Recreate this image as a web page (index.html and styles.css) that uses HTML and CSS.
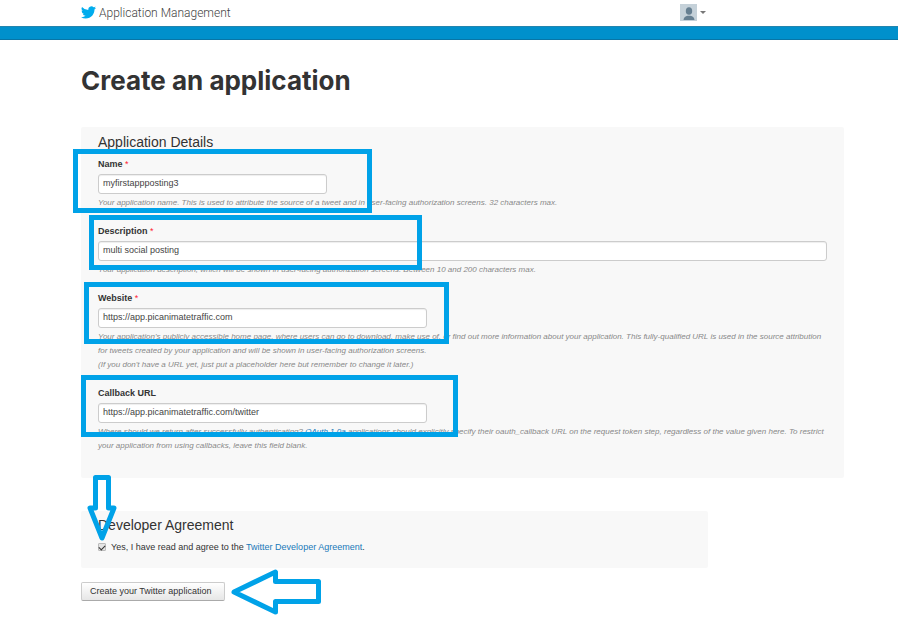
FILE: index.html
```html
<!DOCTYPE html>
<html lang="en">
<head>
<meta charset="utf-8">
<title>Create an application | Application Management</title>
<link rel="stylesheet" href="styles.css">
</head>
<body>
<header class="topbar">
  <a class="brand" href="#">
    <svg class="bird" viewBox="0 0 24 20" aria-hidden="true"><path d="M24 2.4a9.800 9.800 0 0 1-2.830.780A4.940 4.940 0 0 0 23.340.450a9.860 9.860 0 0 1-3.130 1.200 4.920 4.920 0 0 0-8.390 4.490A13.980 13.980 0 0 1 1.670 1a4.920 4.920 0 0 0 1.520 6.570 4.900 4.900 0 0 1-2.230-.620v.060a4.930 4.930 0 0 0 3.950 4.830 4.900 4.900 0 0 1-2.220.080 4.930 4.930 0 0 0 4.600 3.420A9.870 9.870 0 0 1 0 17.540a13.950 13.950 0 0 0 7.550 2.210c9.050 0 14-7.500 14-14l-.020-.640A10 10 0 0 0 24 2.400z"/></svg>
    <span>Application Management</span>
  </a>
  <button class="account" type="button" aria-label="Account menu">
    <svg class="avatar" viewBox="0 0 17 17" aria-hidden="true"><rect width="17" height="17" fill="#c5d1d9"/><ellipse cx="9" cy="7" rx="3.200" ry="3.800" fill="#667f91"/><path d="M3.500 16c.2-3 2-4 4-4.300h3c2 .3 3.800 1.300 4 4.300z" fill="#667f91"/></svg>
    <span class="caret"></span>
  </button>
</header>
<div class="band"></div>
<main class="page">
  <h1>Create an application</h1>
  <form>
    <section class="panel">
      <h2>Application Details</h2>
      <div class="fields">
        <div class="field">
          <label for="name">Name <span class="required">*</span></label>
          <input class="short" id="name" type="text" value="myfirstappposting3">
          <p>Your application name. This is used to attribute the source of a tweet and in user-facing authorization screens. 32 characters max.</p>
          <span class="mark mark-name"></span>
        </div>
        <div class="field">
          <label for="description">Description <span class="required">*</span></label>
          <input id="description" type="text" value="multi social posting">
          <p>Your application description, which will be shown in user-facing authorization screens. Between 10 and 200 characters max.</p>
          <span class="mark mark-description"></span>
        </div>
        <div class="field">
          <label for="website">Website <span class="required">*</span></label>
          <input class="medium" id="website" type="text" value="https://app.picanimatetraffic.com">
          <p>Your application's publicly accessible home page, where users can go to download, make use of, or find out more information about your application. This fully-qualified URL is used in the source attribution for tweets created by your application and will be shown in user-facing authorization screens.<br>(If you don't have a URL yet, just put a placeholder here but remember to change it later.)</p>
          <span class="mark mark-website"></span>
        </div>
        <div class="field">
          <label for="callback">Callback URL</label>
          <input class="medium" id="callback" type="text" value="https://app.picanimatetraffic.com/twitter">
          <p>Where should we return after successfully authenticating? <a href="#">OAuth 1.0a</a> applications should explicitly specify their oauth_callback URL on the request token step, regardless of the value given here. To restrict your application from using callbacks, leave this field blank.</p>
          <span class="mark mark-callback"></span>
        </div>
      </div>
    </section>
    <section class="panel agreement">
      <h2>Developer Agreement</h2>
      <div class="agree">
        <input id="agree" type="checkbox" checked>
        <label for="agree">Yes, I have read and agree to the <a href="#">Twitter Developer Agreement</a>.</label>
      </div>
      <svg class="arrow-down" viewBox="0 0 30 66" aria-hidden="true"><path d="M8.500 2.500h13V33H27L15 63 3 33h5.500z"/></svg>
    </section>
    <div class="actions">
      <button class="submit" type="submit">Create your Twitter application</button>
      <svg class="arrow-left" viewBox="0 0 90 48" aria-hidden="true"><path d="M3 24 44.500 4v9.500h43v20h-43V44z"/></svg>
    </div>
  </form>
</main>
</body>
</html>
```
FILE: styles.css
```css
* { box-sizing: border-box; }
body {
  margin: 0;
  background: #fff;
  color: #333;
  font: 9px/14px "Liberation Sans", Arial, sans-serif;
}
a { color: #2078b8; text-decoration: none; }
h1, h2, p { margin: 0; }
.topbar {
  display: flex;
  align-items: center;
  justify-content: space-between;
  height: 26px;
  padding: 0 192px 1px 81px;
}
.brand {
  display: flex;
  align-items: center;
  gap: 3px;
  color: #444;
  font: 300 12px/20px Roboto, sans-serif;
}
.bird { width: 15px; height: 13px; fill: #00aced; }
.account {
  display: flex;
  align-items: center;
  gap: 3px;
  padding: 0;
  border: 0;
  background: none;
}
.avatar { width: 17px; height: 17px; }
.caret {
  border: 3px solid transparent;
  border-top-color: #777;
  border-bottom: 0;
}
.band {
  height: 14px;
  background: #0090cc;
  border-top: 1px solid #2385ae;
  border-bottom: 1px solid #0875a6;
}
.page { padding: 24px 54px 24px 81px; }
h1 {
  margin-bottom: 29px;
  color: #333;
  font: 700 26px/34px Inter, sans-serif;
}
h2 { font-size: 14px; font-weight: 400; line-height: 20px; }
.panel {
  padding: 5px 17px 25px;
  background: #f8f8f8;
  border-radius: 2px;
}
.fields { display: grid; gap: 14px; margin-top: 5px; }
.field {
  position: relative;
  display: flex;
  flex-direction: column;
  align-items: flex-start;
}
.field label { font-weight: 700; margin-bottom: 3px; }
.required { color: #f23; font-weight: 400; }
.field input {
  width: 100%;
  height: 20px;
  margin: 0 0 2px;
  padding: 0 4px 2px;
  border: 1px solid #ccc;
  border-radius: 3px;
  background: #fff;
  box-shadow: inset 0 1px 1px #eee;
  color: #444;
  font: inherit;
}
.field .short { width: 229px; }
.field .medium { width: 329px; }
.field p { color: #888; font-size: 8px; font-style: italic; }
.mark {
  position: absolute;
  border: 5px solid #00a2e8;
  pointer-events: none;
}
.mark-name { left: -25px; top: -8px; width: 299px; height: 64px; }
.mark-description { left: -9px; top: -9px; width: 333px; height: 55px; }
.mark-website { left: -14px; top: -9px; width: 365px; height: 62px; }
.mark-callback { left: -17px; top: -11px; width: 377px; height: 62px; }
.agreement {
  position: relative;
  width: 82.2%;
  margin-top: 33px;
  padding-top: 4px;
  padding-bottom: 14px;
}
.agree { display: flex; align-items: center; gap: 5px; margin-top: 5px; }
.agree input {
  appearance: none;
  display: grid;
  place-items: center;
  width: 8px;
  height: 8px;
  margin: 0;
  border: 1px solid #bbb;
  border-radius: 1px;
  background: #e4e4e4;
}
.agree input:checked::before {
  content: "";
  width: 5px;
  height: 3px;
  border: solid #333;
  border-width: 0 0 1px 1px;
  transform: rotate(-45deg);
}
.arrow-down, .arrow-left {
  fill: none;
  stroke: #00a2e8;
  stroke-width: 5px;
  stroke-linejoin: round;
}
.arrow-down { position: absolute; left: 6px; top: -36px; width: 30px; height: 66px; }
.actions { position: relative; margin-top: 14px; }
.submit {
  display: block;
  min-width: 144px;
  height: 19px;
  padding: 0 8px 2px;
  border: 1px solid #ccc;
  border-bottom-color: #aaa;
  border-radius: 2px;
  background: linear-gradient(#fff, #e6e6e6);
  color: #333;
  font: inherit;
  text-align: left;
}
.arrow-left { position: absolute; left: 150px; top: -14px; width: 90px; height: 48px; }
```
